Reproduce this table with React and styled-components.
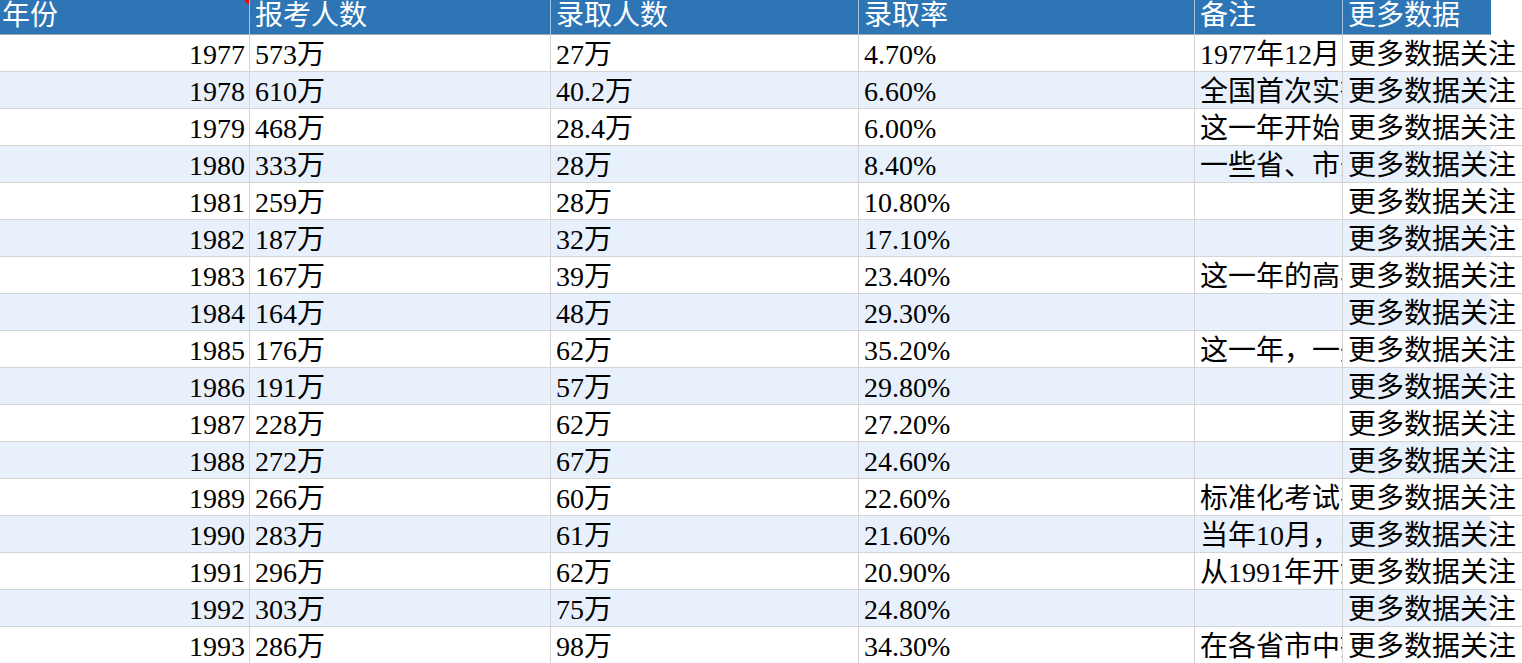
import styled, { createGlobalStyle } from "styled-components";

const GlobalStyle = createGlobalStyle`
  html, body {
    margin: 0;
    padding: 0;
    overflow: hidden;
    background: #fff;
  }
  body {
    font-family: "Liberation Serif", "Noto Sans CJK SC", serif;
  }
`;

const columns = ["年份", "报考人数", "录取人数", "录取率", "备注", "更多数据"];
const more = "更多数据关注";

const rows = [
  ["1977", "573万", "27万", "4.70%", "1977年12月，中断了十年的高考恢复"],
  ["1978", "610万", "40.2万", "6.60%", "全国首次实行统一命题"],
  ["1979", "468万", "28.4万", "6.00%", "这一年开始实行全国统一考试"],
  ["1980", "333万", "28万", "8.40%", "一些省、市开始实行预选"],
  ["1981", "259万", "28万", "10.80%", ""],
  ["1982", "187万", "32万", "17.10%", ""],
  ["1983", "167万", "39万", "23.40%", "这一年的高考开始定向招生"],
  ["1984", "164万", "48万", "29.30%", ""],
  ["1985", "176万", "62万", "35.20%", "这一年，一些高校试行保送生制度"],
  ["1986", "191万", "57万", "29.80%", ""],
  ["1987", "228万", "62万", "27.20%", ""],
  ["1988", "272万", "67万", "24.60%", ""],
  ["1989", "266万", "60万", "22.60%", "标准化考试在全国推行"],
  ["1990", "283万", "61万", "21.60%", "当年10月，实行高中会考制度"],
  ["1991", "296万", "62万", "20.90%", "从1991年开始实行“3+2”科目设置"],
  ["1992", "303万", "75万", "24.80%", ""],
  ["1993", "286万", "98万", "34.30%", "在各省市中推行新的考试科目"],
];

const Sheet = () => {
  return (
    <Wrap>
      <GlobalStyle />
      <HeaderRow>
        {columns.map((c, i) => (
          <HeadCell key={c} $first={i === 0} $last={i === columns.length - 1}>
            {c}
            {i === 0 && <Marker />}
          </HeadCell>
        ))}
      </HeaderRow>
      {rows.map((r, idx) => (
        <Row key={r[0]}>
          <Cell $striped={idx % 2 === 1} $right>
            {r[0]}
          </Cell>
          <Cell $striped={idx % 2 === 1}>{r[1]}</Cell>
          <Cell $striped={idx % 2 === 1}>{r[2]}</Cell>
          <Cell $striped={idx % 2 === 1}>{r[3]}</Cell>
          <Cell $striped={idx % 2 === 1}>{r[4]}</Cell>
          <Cell $striped={idx % 2 === 1} $overflow>
            {more}
          </Cell>
        </Row>
      ))}
    </Wrap>
  );
};

const template = "250px 301px 308px 336px 148px 148px 1fr";

const Wrap = styled.div`
  width: 1522px;
  height: 663px;
  overflow: hidden;
`;

const HeaderRow = styled.div`
  display: grid;
  grid-template-columns: ${template};
  height: 35px;
`;

const HeadCell = styled.div`
  position: relative;
  box-sizing: border-box;
  height: 35px;
  padding: 0 0 0 ${(p) => (p.$first ? "2px" : "5px")};
  background: #2e75b6;
  color: #fff;
  font-size: 28px;
  line-height: 32px;
  white-space: nowrap;
  overflow: hidden;
  border-bottom: 1px solid #9fa7b0;
  border-right: 1px solid ${(p) => (p.$last ? "#2e75b6" : "#a9c4e0")};
`;

const Marker = styled.span`
  position: absolute;
  top: 0;
  right: 0;
  width: 0;
  height: 0;
  border-top: 5px solid #ff0000;
  border-left: 5px solid transparent;
`;

const Row = styled.div`
  display: grid;
  grid-template-columns: ${template};
  height: 37px;
  box-sizing: border-box;
  border-bottom: 1px solid #d4d4d4;
`;

const Cell = styled.div`
  box-sizing: border-box;
  height: 36px;
  padding: 3px ${(p) => (p.$right ? "4px" : "0")} 0
    ${(p) => (p.$right ? "0" : "5px")};
  border-right: 1px solid #d4d4d4;
  background: ${(p) => (p.$striped ? "#e7f0fb" : "#fff")};
  color: #000;
  font-size: 28px;
  line-height: 33px;
  text-align: ${(p) => (p.$right ? "right" : "left")};
  white-space: nowrap;
  overflow: ${(p) => (p.$overflow ? "visible" : "hidden")};
  border-right-color: ${(p) => (p.$overflow ? "transparent" : "#d4d4d4")};
`;

export default Sheet;
